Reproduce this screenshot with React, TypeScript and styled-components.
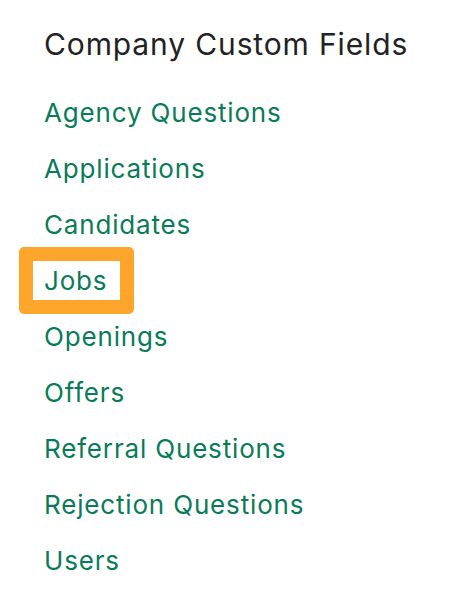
import React from 'react';
import styled, { createGlobalStyle } from 'styled-components';

const GlobalStyle = createGlobalStyle`
    body {
        margin: 0;
        background: #ffffff;
        font-family: Inter, "Liberation Sans", sans-serif;
    }
`;

const StyledPanel = styled.nav`
    padding: 24px 0 0 44px;
`;

const StyledTitle = styled.h2`
    margin: 0 0 21px;
    font-size: 30px;
    line-height: 40px;
    font-weight: 400;
    letter-spacing: 0.029em;
    color: #222222;
`;

const StyledList = styled.ul`
    margin: 0;
    padding: 0;
    list-style: none;
`;

const StyledItem = styled.li`
    position: relative;
    height: 56px;
    line-height: 56px;
`;

const StyledLink = styled.a`
    font-size: 26px;
    letter-spacing: 0.032em;
    color: #0a7b58;
    text-decoration: none;
`;

const StyledHighlight = styled.span`
    position: absolute;
    left: -25px;
    top: -6px;
    width: 87px;
    height: 39px;
    border: 14px solid #ffa52b;
    border-radius: 5px;
    pointer-events: none;
`;

const fields = [
    'Agency Questions',
    'Applications',
    'Candidates',
    'Jobs',
    'Openings',
    'Offers',
    'Referral Questions',
    'Rejection Questions',
    'Users',
];

export default function App() {
    return (
        <>
            <GlobalStyle />
            <StyledPanel>
                <StyledTitle>Company Custom Fields</StyledTitle>
                <StyledList>
                    {fields.map((field) => (
                        <StyledItem key={field}>
                            {field === 'Jobs' && <StyledHighlight />}
                            <StyledLink href="#">{field}</StyledLink>
                        </StyledItem>
                    ))}
                </StyledList>
            </StyledPanel>
        </>
    );
}
